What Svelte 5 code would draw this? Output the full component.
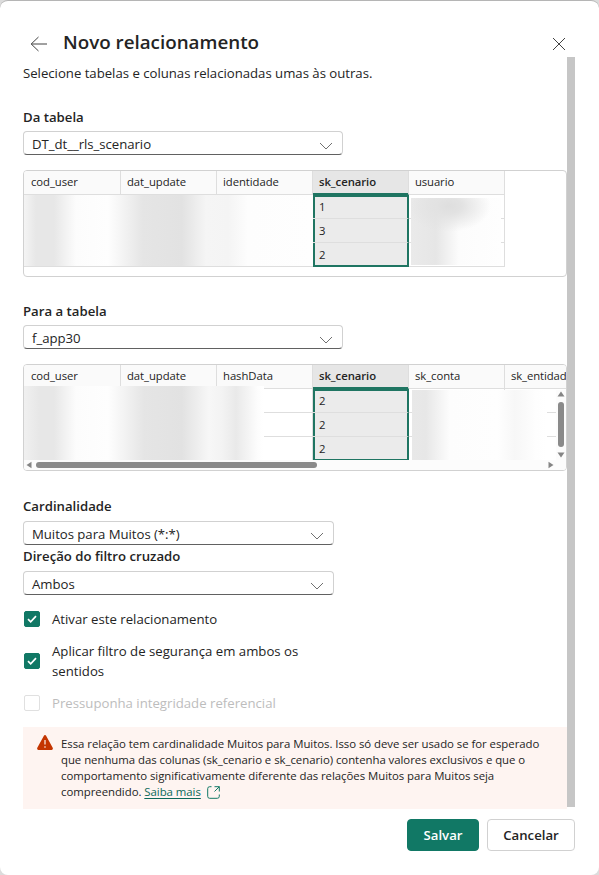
<script>
  let fromTable = $state('DT_dt__rls_scenario')
  let toTable = $state('f_app30')
  let cardinality = $state('Muitos para Muitos (*:*)')
  let direction = $state('Ambos')

  const key = 'sk_cenario'
  const fromColumns = ['cod_user', 'dat_update', 'identidade', key, 'usuario']
  const toColumns = [
    'cod_user',
    'dat_update',
    'hashData',
    key,
    'sk_conta',
    'sk_entidad',
  ]

  let options = $state([
    { label: 'Ativar este relacionamento', checked: true },
    {
      label: 'Aplicar filtro de segurança em ambos os sentidos',
      checked: true,
    },
    {
      label: 'Pressuponha integridade referencial',
      checked: false,
      disabled: true,
    },
  ])

  function toggle(option) {
    if (!option.disabled) option.checked = !option.checked
  }
</script>

{#snippet dropdown(value, small)}
  <button class="select" class:small>
    <span>{value}</span>
    <svg width="14" height="8" viewBox="0 0 14 8">
      <path d="M1 1l6 6 6-6" />
    </svg>
  </button>
{/snippet}

{#snippet preview(columns, values)}
  <table>
    <thead>
      <tr>
        {#each columns as column}
          <th class:selected={column === key}>{column}</th>
        {/each}
      </tr>
    </thead>
    <tbody>
      {#each values as value}
        <tr>
          {#each columns as column}
            <td class:selected={column === key}>
              {column === key ? value : ''}
            </td>
          {/each}
        </tr>
      {/each}
    </tbody>
  </table>
{/snippet}

<div class="dialog">
  <header>
    <button class="icon" aria-label="Voltar">
      <svg width="18" height="16" viewBox="0 0 18 16">
        <path d="M8.5 1L1.2 8l7.3 7M1.2 8H17" />
      </svg>
    </button>
    <h1>Novo relacionamento</h1>
    <button class="icon close" aria-label="Fechar">
      <svg width="14" height="14" viewBox="0 0 14 14">
        <path d="M1 1l12 12M13 1L1 13" />
      </svg>
    </button>
  </header>

  <main>
    <div class="content">
      <p class="intro">
        Selecione tabelas e colunas relacionadas umas às outras.
      </p>

      <section>
        <h2>Da tabela</h2>
        {@render dropdown(fromTable)}
        <div class="grid">
          {@render preview(fromColumns, [1, 3, 2])}
          <div class="mask from-left"></div>
          <div class="mask from-right"></div>
        </div>
      </section>

      <section>
        <h2>Para a tabela</h2>
        {@render dropdown(toTable)}
        <div class="grid">
          {@render preview(toColumns, [2, 2, 2])}
          <div class="mask to-left"></div>
          <div class="mask to-right"></div>
          <div class="vbar">
            <svg width="8" height="6" viewBox="0 0 8 6">
              <path d="M4 0.5L7.5 5.5h-7z" />
            </svg>
            <i></i>
            <svg width="8" height="6" viewBox="0 0 8 6">
              <path d="M4 5.5L7.5 0.5h-7z" />
            </svg>
          </div>
          <div class="hbar">
            <svg width="6" height="8" viewBox="0 0 6 8">
              <path d="M0.5 4L5.5 0.8v6.4z" />
            </svg>
            <i></i>
            <svg width="6" height="8" viewBox="0 0 6 8">
              <path d="M5.5 4L0.5 0.8v6.4z" />
            </svg>
          </div>
        </div>
      </section>

      <section class="settings">
        <h2>Cardinalidade</h2>
        {@render dropdown(cardinality, true)}
        <h2>Direção do filtro cruzado</h2>
        {@render dropdown(direction, true)}
      </section>

      <div class="options">
        {#each options as option}
          <button
            class="option"
            class:disabled={option.disabled}
            role="checkbox"
            aria-checked={option.checked}
            onclick={() => toggle(option)}
          >
            <span class="box" class:checked={option.checked}>
              {#if option.checked}
                <svg width="10" height="8" viewBox="0 0 10 8">
                  <path d="M1 4.2l2.7 2.6L9 1.2" />
                </svg>
              {/if}
            </span>
            <span class="text">{option.label}</span>
          </button>
        {/each}
      </div>

      <div class="warning">
        <svg class="alert" width="16" height="15" viewBox="0 0 16 15">
          <path
            class="sign"
            d="M6.9.7a1.25 1.25 0 0 1 2.2 0l6.6 12.1c.5.9-.1 2.1-1.1 2.1H1.4c-1 0-1.6-1.2-1.1-2.1z"
          />
          <path class="mark" d="M8 5v4.6M8 11.2v1.5" />
        </svg>
        <p>
          Essa relação tem cardinalidade Muitos para Muitos. Isso só deve ser
          usado se for esperado<br />
          que nenhuma das colunas (sk_cenario e sk_cenario) contenha valores
          exclusivos e que o<br />
          comportamento significativamente diferente das relações Muitos para
          Muitos seja<br />
          compreendido. <a href="#saiba-mais">Saiba mais</a>
          <svg class="open" width="13" height="13" viewBox="0 0 13 13">
            <path
              d="M4.5.7H2.7a2 2 0 0 0-2 2v7.6a2 2 0 0 0 2 2h7.6a2 2 0 0 0 2-2V8.5M7.5.7h4.8v4.8M12.3.7L7.5 5.5"
            />
          </svg>
        </p>
      </div>
    </div>
    <div class="scrollbar"></div>
  </main>

  <footer>
    <button class="action primary">Salvar</button>
    <button class="action">Cancelar</button>
  </footer>
</div>

<style>
  :global(body) {
    background: #dcdcdc;
  }

  * {
    box-sizing: border-box;
  }

  .dialog {
    display: flex;
    flex-direction: column;
    height: 875px;
    padding: 0 24px 24px 23px;
    border-top: 1px solid #b5b5b5;
    border-radius: 8px;
    background: #fff;
    color: #242424;
    font-family: 'Open Sans', 'Noto Sans', sans-serif;
    font-size: 13.2px;
  }

  button {
    padding: 0;
    border: none;
    background: none;
    color: inherit;
    font: inherit;
    letter-spacing: inherit;
    text-align: left;
  }

  h1,
  h2,
  p {
    margin: 0;
  }

  svg {
    display: block;
    flex: none;
    fill: none;
    stroke: #424242;
  }

  header {
    display: flex;
    align-items: center;
    height: 56px;
    padding: 27px 9px 0 7px;
    flex: none;
  }

  header h1 {
    flex: 1;
    margin: -2px 0 0 15px;
    font-size: 18.8px;
    font-weight: 600;
    line-height: 28px;
  }

  .icon {
    margin-top: 3px;
  }

  .icon.close {
    margin-top: 2px;
  }

  main {
    display: flex;
    height: 752px;
    flex: none;
  }

  .content {
    width: 544px;
  }

  .scrollbar {
    width: 8px;
    height: 750px;
    background: #c6c6c6;
  }

  .intro {
    padding-top: 6px;
    letter-spacing: -0.02px;
    line-height: 20px;
    white-space: nowrap;
  }

  section {
    padding-top: 24px;
  }

  section.settings {
    padding-top: 25px;
  }

  h2 {
    font-size: 13.2px;
    font-weight: 600;
    line-height: 20px;
  }

  .select {
    display: flex;
    align-items: center;
    justify-content: space-between;
    width: 320px;
    height: 24px;
    margin-top: 4px;
    padding: 1px 9px 0 8px;
    border: 1px solid #d1d1d1;
    border-bottom-color: #616161;
    border-radius: 4px;
    letter-spacing: -0.04px;
  }

  .select.small {
    width: 311px;
  }

  .select svg {
    margin-top: 5px;
    stroke: #707070;
  }

  .settings .select {
    margin: 5px 0 1px;
  }

  .grid {
    position: relative;
    height: 107px;
    margin-top: 15px;
    border: 1px solid #d1d1d1;
    border-radius: 4px;
    overflow: hidden;
  }

  table {
    width: max-content;
    border-collapse: separate;
    border-spacing: 0;
    table-layout: fixed;
    font-size: 11.3px;
  }

  th,
  td {
    width: 96px;
    min-width: 96px;
    height: 24px;
    padding: 0 0 0 6px;
    border-right: 1px solid #dedede;
    border-bottom: 1px solid #dedede;
    line-height: 16px;
    text-align: left;
  }

  th:first-child,
  td:first-child {
    width: 97px;
    min-width: 97px;
    padding-left: 7px;
  }

  th {
    padding-bottom: 2px;
    background: #fafafa;
    font-weight: 400;
    letter-spacing: -0.05px;
  }

  th:last-child {
    letter-spacing: -0.1px;
  }

  td {
    padding-top: 1px;
  }

  th.selected {
    border-bottom-color: #1f7562;
    background: #e6e6e6;
    box-shadow: inset 0 -1px #1f7562;
    font-weight: 600;
  }

  td.selected {
    border-right: 2px solid #1f7562;
    background: #ebebeb;
    box-shadow: inset 2px 0 #1f7562;
  }

  tr:first-child td.selected {
    box-shadow:
      inset 2px 0 #1f7562,
      inset 0 2px #1f7562;
  }

  tr:last-child td.selected {
    border-bottom: 2px solid #1f7562;
  }

  /* Hidden cell values */
  .mask {
    position: absolute;
  }

  .from-left {
    top: 24px;
    left: 0;
    width: 289px;
    height: 71px;
    background: linear-gradient(
      90deg,
      #f4f4f4,
      #e7e7e7 12px,
      #e7e7e7 30px,
      #fcfcfc 52px,
      #fefefe 84px,
      #e5e5e5 119px,
      #e2e2e2 158px,
      #f5f5f5 182px,
      #f4f4f4 204px,
      #fdfdfd 224px,
      #fefefe
    );
  }

  .from-right {
    top: 27px;
    left: 387px;
    width: 90px;
    height: 67px;
    background:
      radial-gradient(
        ellipse 42px 26px at 38px 8px,
        #dedede,
        #e2e2e2 30%,
        transparent
      ),
      linear-gradient(90deg, #eaeaea, #e6e6e6 25px, #fcfcfc 48px, #fefefe);
  }

  .to-left {
    top: 21px;
    left: 0;
    width: 240px;
    height: 76px;
    background: linear-gradient(
      90deg,
      #f0f0f0,
      #e7e7e7 15px,
      #e7e7e7 30px,
      #fcfcfc 52px,
      #fefefe 84px,
      #e5e5e5 120px,
      #e2e2e2 158px,
      #f7f7f7 185px,
      #f3f3f3 198px,
      #e9e9e9 212px,
      #fdfdfd 234px,
      #fff
    );
  }

  .to-right {
    top: 25px;
    left: 388px;
    width: 135px;
    height: 70px;
    background: linear-gradient(
      90deg,
      #e8e8e8,
      #e7e7e7 14px,
      #fdfdfd 38px,
      #fefefe 86px,
      #f7f7f7 103px,
      #fefefe 124px,
      #fff
    );
  }

  .vbar,
  .hbar {
    position: absolute;
    display: flex;
    align-items: center;
    background: #fcfcfc;
  }

  .vbar svg,
  .hbar svg {
    fill: #858585;
    stroke: none;
  }

  .vbar {
    top: 25px;
    right: 0;
    width: 10px;
    height: 70px;
    padding: 1px 0 2px;
    flex-direction: column;
  }

  .vbar i {
    width: 6px;
    height: 46px;
    margin: 5px 0;
    border-radius: 3px;
    background: #8a8a8a;
  }

  .hbar {
    bottom: 0;
    left: 0;
    width: 100%;
    height: 10px;
    padding: 0 12px 0 2px;
  }

  .hbar i {
    width: 281px;
    height: 6px;
    margin: 0 auto 0 4px;
    border-radius: 3px;
    background: #8a8a8a;
  }

  .options {
    display: flex;
    flex-direction: column;
    gap: 12px;
    width: 300px;
    padding: 13px 0 0 1px;
  }

  .option {
    display: flex;
    align-items: center;
    line-height: 20px;
  }

  .box {
    display: flex;
    align-items: center;
    justify-content: center;
    width: 16px;
    height: 16px;
    margin-right: 12px;
    border: 1px solid #e0e0e0;
    border-radius: 2px;
    flex: none;
  }

  .box.checked {
    border-color: #117865;
    background: #117865;
  }

  .box svg {
    stroke: #fff;
    stroke-width: 1.7;
  }

  .disabled {
    color: #bdbdbd;
  }

  .warning {
    display: flex;
    height: 82px;
    margin-top: 14px;
    padding: 8px 0 0 14px;
    background: #fef4f1;
  }

  .warning p {
    margin: 1px 0 0 8px;
    font-size: 11.4px;
    letter-spacing: -0.04px;
    line-height: 16px;
    white-space: nowrap;
  }

  .alert .sign {
    fill: #c43501;
    stroke: none;
  }

  .alert .mark {
    stroke: #fdf4f1;
    stroke-width: 1.2;
  }

  a {
    color: #0c695a;
    text-underline-offset: 2px;
  }

  .open {
    display: inline-block;
    margin-left: 3px;
    stroke: #117865;
    vertical-align: -3px;
  }

  footer {
    display: flex;
    justify-content: flex-end;
    gap: 8px;
    margin-top: 10px;
  }

  .action {
    width: 88px;
    height: 32px;
    border: 1px solid #d1d1d1;
    border-radius: 4px;
    font-weight: 600;
    text-align: center;
  }

  .action.primary {
    width: 72px;
    border-color: #117865;
    background: #117865;
    color: #fff;
  }
</style>
